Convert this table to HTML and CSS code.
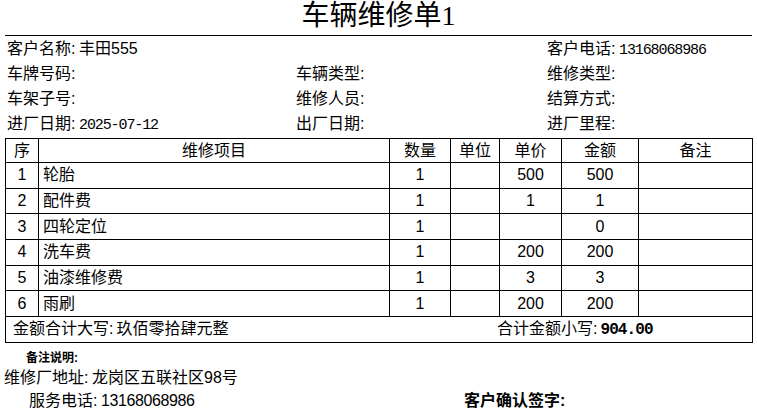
FILE: index.html
```html
<!DOCTYPE html>
<html lang="zh-CN">
<head>
<meta charset="utf-8">
<title>车辆维修单1</title>
<link rel="stylesheet" href="styles.css">
</head>
<body>
<div class="page">
  <h1 class="title">车辆维修单1</h1>
  <div class="info">
    <div class="f"><span class="k">客户名称:</span><span>丰田555</span></div>
    <div class="f"></div>
    <div class="f"><span class="k">客户电话:</span><span class="num">13168068986</span></div>
    <div class="f"><span class="k">车牌号码:</span></div>
    <div class="f"><span class="k">车辆类型:</span></div>
    <div class="f"><span class="k">维修类型:</span></div>
    <div class="f"><span class="k">车架子号:</span></div>
    <div class="f"><span class="k">维修人员:</span></div>
    <div class="f"><span class="k">结算方式:</span></div>
    <div class="f"><span class="k">进厂日期:</span><span class="num">2025-07-12</span></div>
    <div class="f"><span class="k">出厂日期:</span></div>
    <div class="f"><span class="k">进厂里程:</span></div>
  </div>
  <table class="items">
    <colgroup>
      <col class="c-seq"><col class="c-name"><col class="c-qty"><col class="c-unit"><col class="c-price"><col class="c-amt"><col class="c-rem">
    </colgroup>
    <thead>
      <tr><th>序</th><th>维修项目</th><th>数量</th><th>单位</th><th>单价</th><th>金额</th><th>备注</th></tr>
    </thead>
    <tbody>
      <tr><td class="ctr">1</td><td class="name">轮胎</td><td class="ctr">1</td><td></td><td class="ctr">500</td><td class="ctr">500</td><td></td></tr>
      <tr><td class="ctr">2</td><td class="name">配件费</td><td class="ctr">1</td><td></td><td class="ctr">1</td><td class="ctr">1</td><td></td></tr>
      <tr><td class="ctr">3</td><td class="name">四轮定位</td><td class="ctr">1</td><td></td><td class="ctr"></td><td class="ctr">0</td><td></td></tr>
      <tr><td class="ctr">4</td><td class="name">洗车费</td><td class="ctr">1</td><td></td><td class="ctr">200</td><td class="ctr">200</td><td></td></tr>
      <tr><td class="ctr">5</td><td class="name">油漆维修费</td><td class="ctr">1</td><td></td><td class="ctr">3</td><td class="ctr">3</td><td></td></tr>
      <tr><td class="ctr">6</td><td class="name">雨刷</td><td class="ctr">1</td><td></td><td class="ctr">200</td><td class="ctr">200</td><td></td></tr>
      <tr class="total">
        <td colspan="7">
          <div class="total-in">
            <span><span class="tk">金额合计大写:</span>玖佰零拾肆元整</span>
            <span><span class="tk">合计金额小写:</span><b class="sum">904.00</b></span>
          </div>
        </td>
      </tr>
    </tbody>
  </table>
  <div class="footer">
    <div class="note">备注说明:</div>
    <div class="addr"><span class="ak">维修厂地址:</span>龙岗区五联社区98号</div>
    <div class="last">
      <div class="svc"><span class="k">服务电话:</span><span class="tel">13168068986</span></div>
      <div class="sign">客户确认签字:</div>
    </div>
  </div>
</div>
</body>
</html>
```
FILE: styles.css
```css
* { box-sizing: border-box; }
html, body { margin: 0; padding: 0; background: #fff; }
body {
  color: #000;
  font-family: "Liberation Sans", "Noto Sans CJK SC", sans-serif;
  font-size: 16px;
}
.page { width: 757px; }
.title {
  margin: 0 5px;
  height: 36px;
  border-bottom: 1px solid #000;
  font-family: "Liberation Serif", "Noto Sans CJK SC", serif;
  font-size: 28px;
  font-weight: normal;
  line-height: 31px;
  text-align: center;
}
.info {
  display: grid;
  grid-template-columns: 289px 251px 1fr;
  grid-auto-rows: 25px;
  padding-left: 7px;
  line-height: 25px;
}
.f { white-space: nowrap; }
.k { display: inline-block; width: 72px; }
.num {
  font-family: "Liberation Mono", monospace;
  font-size: 15px;
  letter-spacing: -1.1px;
}
.items {
  margin: 2px 0 0 5px;
  width: 747px;
  border-collapse: collapse;
  table-layout: fixed;
}
.c-seq { width: 33px; }
.c-name { width: 351px; }
.c-qty { width: 61px; }
.c-unit { width: 49px; }
.c-price { width: 62px; }
.c-amt { width: 77px; }
.c-rem { width: 114px; }
.items th, .items td {
  border: 1px solid #000;
  padding: 0;
  font-weight: normal;
  line-height: 20px;
  white-space: nowrap;
}
.items thead tr { height: 24px; }
.items tbody tr { height: 25.67px; }
.items th { text-align: center; }
.ctr { text-align: center; }
.name { padding-left: 4px !important; }
.total td { padding-left: 7px; }
.total-in {
  display: grid;
  grid-template-columns: 484px auto;
}
.tk { display: inline-block; }
.total-in .tk { padding-right: 3px; }
.sum {
  font-family: "Liberation Mono", monospace;
  font-size: 16px;
  font-weight: bold;
  letter-spacing: -0.9px;
}
.footer { line-height: 20px; }
.note {
  margin-top: 5px;
  padding-left: 26px;
  font-size: 12px;
  font-weight: bold;
}
.addr { padding-left: 4px; }
.ak { display: inline-block; width: 88px; }
.last { display: flex; line-height: 26px; }
.svc { width: 464px; padding-left: 29px; }
.tel { letter-spacing: -0.4px; }
.sign { font-weight: bold; }
```
